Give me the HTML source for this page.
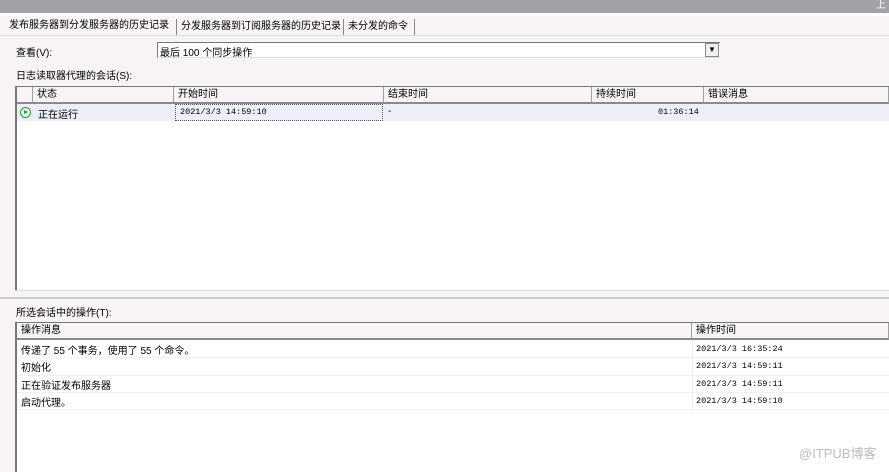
<!DOCTYPE html>
<html><head><meta charset="utf-8"><style>
*{margin:0;padding:0;box-sizing:border-box}
body{width:889px;height:466px;overflow:hidden;background:#f7f3f7;font-family:"Liberation Sans","Noto Sans CJK SC","WenQuanYi Zen Hei",sans-serif;font-size:10px;color:#000;position:relative}
.a{position:absolute;white-space:nowrap}
.mono{font-family:"Liberation Mono","Noto Sans CJK SC",monospace;font-size:8.5px}
.hd{position:absolute;height:17px;background:#f7f3f7;border-right:1px solid #a0a0a0;border-bottom:2px solid #8a8a8a;padding:1px 4px;line-height:14px}
</style></head><body>
<div class="a" style="left:0;top:0;width:889px;height:13px;background:#a3a1a5"></div>
<div class="a" style="left:876px;top:0;color:#fff;font-size:10px;line-height:12px">上</div>
<div class="a" style="left:0;top:13px;width:889px;height:3px;background:#fff"></div>
<div class="a" style="left:0;top:35px;width:889px;height:1px;background:#ddd"></div>
<div class="a" style="left:9px;top:19px;line-height:14px">发布服务器到分发服务器的历史记录</div>
<div class="a" style="left:176px;top:19px;width:1px;height:16px;background:#888"></div>
<div class="a" style="left:181px;top:20px;line-height:14px">分发服务器到订阅服务器的历史记录</div>
<div class="a" style="left:343px;top:19px;width:1px;height:16px;background:#888"></div>
<div class="a" style="left:348px;top:20px;line-height:14px">未分发的命令</div>
<div class="a" style="left:414px;top:19px;width:1px;height:16px;background:#888"></div>
<div class="a" style="left:16px;top:44px">查看(V):</div>
<div class="a" style="left:157px;top:42px;width:563px;height:16px;background:#fff;border-top:1px solid #777;border-left:1px solid #777;border-bottom:1px solid #ddd"></div>
<div class="a" style="left:160px;top:44px">最后 100 个同步操作</div>
<div class="a" style="left:705px;top:43px;width:14px;height:14px;background:#f0f0f0;border:1px solid #888;font-size:8px;text-align:center;line-height:12px">▼</div>
<div class="a" style="left:16px;top:67px">日志读取器代理的会话(S):</div>
<div class="a" style="left:15px;top:86px;width:880px;height:204px;background:#fff;border-left:2px solid #777;border-top:1px solid #777"></div>
<div class="hd" style="left:17px;top:87px;width:16px"></div>
<div class="hd" style="left:33px;top:87px;width:141px">状态</div>
<div class="hd" style="left:174px;top:87px;width:210px">开始时间</div>
<div class="hd" style="left:384px;top:87px;width:208px">结束时间</div>
<div class="hd" style="left:592px;top:87px;width:112px">持续时间</div>
<div class="hd" style="left:704px;top:87px;width:185px">错误消息</div>
<div class="a" style="left:17px;top:104px;width:872px;height:17px;background:#eceff8"></div>
<div class="a" style="left:20px;top:107px;width:11px;height:11px;border:1.5px solid #2a9a2a;border-radius:50%"></div>
<div class="a" style="left:24px;top:110px;width:0;height:0;border-left:4px solid #2a9a2a;border-top:2.5px solid transparent;border-bottom:2.5px solid transparent"></div>
<div class="a" style="left:38px;top:106px">正在运行</div>
<div class="a" style="left:175px;top:104px;width:208px;height:17px;border:1px dotted #555;background:#eceff8"></div>
<div class="a mono" style="left:180px;top:107px">2021/3/3 14:59:10</div>
<div class="a" style="left:388px;top:106px">-</div>
<div class="a mono" style="left:658px;top:107px">01:36:14</div>
<div class="a" style="left:15px;top:290px;width:874px;height:1px;background:#ddd"></div>
<div class="a" style="left:0;top:297px;width:889px;height:2px;background:#ccc"></div>
<div class="a" style="left:16px;top:304px">所选会话中的操作(T):</div>
<div class="a" style="left:15px;top:322px;width:880px;height:150px;background:#fff;border-left:2px solid #777;border-top:1px solid #777"></div>
<div class="hd" style="left:17px;top:323px;width:675px">操作消息</div>
<div class="hd" style="left:692px;top:323px;width:197px">操作时间</div>
<div class="a" style="left:692px;top:340px;width:1px;height:70px;background:#eee"></div>
<div class="a" style="left:21px;top:342px">传递了 55 个事务，使用了 55 个命令。</div>
<div class="a" style="left:21px;top:359px">初始化</div>
<div class="a" style="left:21px;top:377px">正在验证发布服务器</div>
<div class="a" style="left:21px;top:394px">启动代理。</div>
<div class="a" style="left:17px;top:357px;width:872px;height:1px;background:#f0f0f0"></div>
<div class="a" style="left:17px;top:375px;width:872px;height:1px;background:#f0f0f0"></div>
<div class="a" style="left:17px;top:392px;width:872px;height:1px;background:#f0f0f0"></div>
<div class="a" style="left:17px;top:409px;width:872px;height:1px;background:#f0f0f0"></div>
<div class="a mono" style="left:696px;top:344px">2021/3/3 16:35:24</div>
<div class="a mono" style="left:696px;top:361px">2021/3/3 14:59:11</div>
<div class="a mono" style="left:696px;top:379px">2021/3/3 14:59:11</div>
<div class="a mono" style="left:696px;top:396px">2021/3/3 14:59:10</div>
<div class="a" style="left:799px;top:443px;font-size:13px;color:#bbb">@ITPUB博客</div>
</body></html>
